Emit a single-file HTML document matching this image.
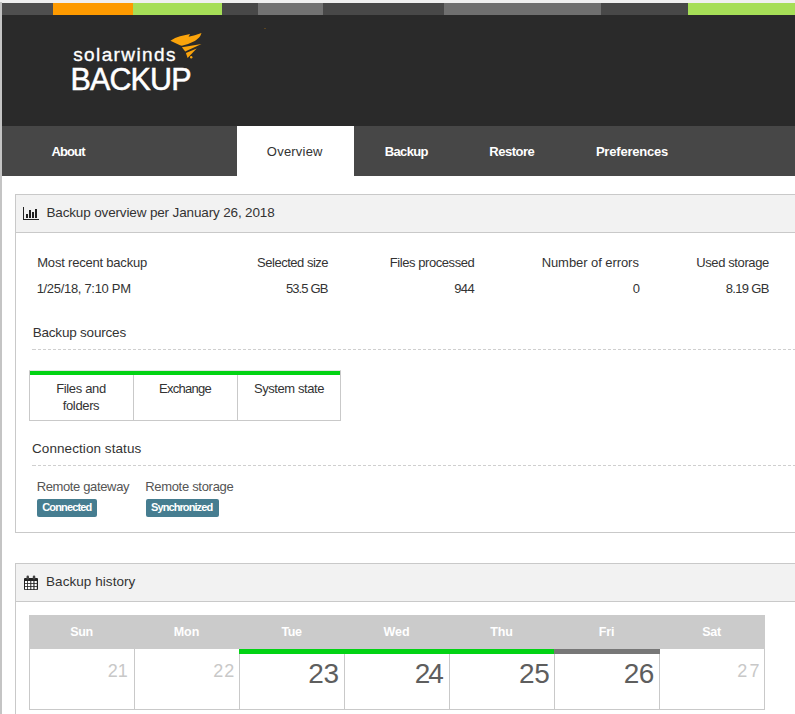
<!DOCTYPE html>
<html><head><meta charset="utf-8">
<style>
html,body{margin:0;padding:0;}
body{width:795px;height:714px;overflow:hidden;position:relative;background:#fff;font-family:"Liberation Sans",sans-serif;color:#333;}
.a{position:absolute;white-space:nowrap;line-height:1;}
.bx{position:absolute;}
</style></head><body>
<!-- frame -->
<div class="bx" style="left:0;top:0;width:795px;height:3px;background:#f0f0f0"></div>
<div class="bx" style="left:0;top:2px;width:2px;height:712px;background:#c4c4c4"></div>
<!-- top strip -->
<div class="bx" style="left:2px;top:3px;width:51px;height:12px;background:#4f4f4f"></div>
<div class="bx" style="left:53px;top:3px;width:80px;height:12px;background:#fd9a00"></div>
<div class="bx" style="left:133px;top:3px;width:89px;height:12px;background:#a6de57"></div>
<div class="bx" style="left:222px;top:3px;width:36px;height:12px;background:#484848"></div>
<div class="bx" style="left:258px;top:3px;width:65px;height:12px;background:#727272"></div>
<div class="bx" style="left:323px;top:3px;width:121px;height:12px;background:#484848"></div>
<div class="bx" style="left:444px;top:3px;width:157px;height:12px;background:#6f6f6f"></div>
<div class="bx" style="left:601px;top:3px;width:87px;height:12px;background:#484848"></div>
<div class="bx" style="left:688px;top:3px;width:107px;height:12px;background:#a6de57"></div>
<!-- header -->
<div class="bx" style="left:2px;top:15px;width:793px;height:111px;background:#2a2a2a"></div>
<div class="a" id="t_sw" style="left: 73.15px; top: 45px; font-size: 19px; color: rgb(255, 255, 255); right: auto; letter-spacing: 1.4px; -webkit-text-stroke: 0.35px #fff;">solarwinds</div>
<div class="a" id="t_bk" style="left: 70.55px; top: 63.5px; font-size: 30.5px; color: rgb(255, 255, 255); right: auto; letter-spacing: -0.9px; -webkit-text-stroke: 0.5px #fff;">BACKUP</div>
<svg class="bx" style="left:160px;top:25px" width="50" height="40" viewBox="0 0 50 40">
<path fill="#fba40b" d="M10.4,15.8 Q15,12.5 20,11.2 L30,9.1 L28.6,11.7 L34.8,10.3 L41.5,8.1 Q40.6,11 39.1,12.6 Q36.5,15 34.8,16 L28.1,18.9 L21.9,20.8 L20,20.3 Q15,18 10.4,15.8 Z"/>
<path fill="#fba40b" d="M21.9,22.2 L41.5,19.1 L25.2,26.5 Z"/>
<path fill="#fba40b" d="M25.9,27.9 L36.7,23.4 L27.6,33 Z"/>
<circle fill="#fba40b" cx="31.2" cy="32.2" r="1.2"/>
</svg>
<div class="bx" style="left:264px;top:28px;width:2px;height:1px;background:#5a4420"></div>
<!-- nav -->
<div class="bx" style="left:2px;top:126px;width:793px;height:50px;background:#474747"></div>
<div class="bx" style="left:237px;top:126px;width:117px;height:50px;background:#fff"></div>
<div class="a" id="n1" style="left: 51.4px; top: 145px; font-size: 13px; font-weight: bold; color: rgb(255, 255, 255); right: auto; letter-spacing: -0.85px;">About</div>
<div class="a" id="n2" style="left: 266.85px; top: 145px; font-size: 13px; color: rgb(51, 51, 51); right: auto; letter-spacing: 0.213px;">Overview</div>
<div class="a" id="n3" style="left: 384.65px; top: 145px; font-size: 13px; font-weight: bold; color: rgb(255, 255, 255); right: auto; letter-spacing: -0.62px;">Backup</div>
<div class="a" id="n4" style="left: 489.25px; top: 145px; font-size: 13px; font-weight: bold; color: rgb(255, 255, 255); right: auto; letter-spacing: -0.483px;">Restore</div>
<div class="a" id="n5" style="left: 595.9px; top: 145px; font-size: 13px; font-weight: bold; color: rgb(255, 255, 255); right: auto; letter-spacing: -0.2px;">Preferences</div>

<!-- panel 1 -->
<div class="bx" style="left:15px;top:194px;width:790px;height:337px;border:1px solid #c9c9c9;"></div>
<div class="bx" style="left:16px;top:195px;width:779px;height:37px;background:#f2f2f2;border-bottom:1px solid #c9c9c9"></div>
<svg class="bx" style="left:20px;top:204px" width="24" height="20" viewBox="0 0 24 20">
<rect x="3" y="3" width="1" height="13" fill="#222"></rect>
<rect x="3" y="15" width="16" height="1" fill="#222"></rect>
<rect x="6" y="10" width="2" height="4" fill="#222"></rect>
<rect x="9" y="6" width="2" height="8" fill="#222"></rect>
<rect x="12" y="8" width="2" height="6" fill="#222"></rect>
<rect x="15" y="5" width="2" height="9" fill="#222"></rect>
</svg>
<div class="a" id="h1" style="left: 46.45px; top: 206px; font-size: 13.5px; right: auto; letter-spacing: -0.146px;">Backup overview per January 26, 2018</div>

<div class="a" id="s1" style="left: 37.25px; top: 256px; font-size: 13px; right: auto; letter-spacing: -0.205px;">Most recent backup</div>
<div class="a" id="s2" style="right: auto; top: 256px; font-size: 13px; left: 257.07px; letter-spacing: -0.484px;">Selected size</div>
<div class="a" id="s3" style="right: auto; top: 256px; font-size: 13px; left: 389.8px; letter-spacing: -0.436px;">Files processed</div>
<div class="a" id="s4" style="right: auto; top: 256px; font-size: 13px; left: 541.65px; letter-spacing: -0.067px;">Number of errors</div>
<div class="a" id="s5" style="right: auto; top: 256px; font-size: 13px; left: 696.17px; letter-spacing: -0.381px;">Used storage</div>
<div class="a" id="v1" style="left: 36.65px; top: 282px; font-size: 13px; right: auto; letter-spacing: -0.313px;">1/25/18, 7:10 PM</div>
<div class="a" id="v2" style="right: auto; top: 282px; font-size: 13px; left: 285.9px; letter-spacing: -0.867px;">53.5 GB</div>
<div class="a" id="v3" style="right: auto; top: 282px; font-size: 13px; left: 454.2px; letter-spacing: -0.6px;">944</div>
<div class="a" id="v4" style="right: auto; top: 282px; font-size: 13px; left: 632.67px;">0</div>
<div class="a" id="v5" style="right: auto; top: 282px; font-size: 13px; left: 725.75px; letter-spacing: -0.683px;">8.19 GB</div>

<div class="a" id="bs" style="left: 32.7px; top: 325.5px; font-size: 13.5px; right: auto; letter-spacing: -0.199px;">Backup sources</div>
<div class="bx" style="left:32px;top:349px;width:763px;height:1px;background:repeating-linear-gradient(90deg,#cfcfcf 0 3px,transparent 3px 5px);background-position:1px 0"></div>

<div class="bx" style="left:29px;top:370px;width:310px;height:49px;border:1px solid #c9c9c9;border-top-color:#e3e3e3"></div><div class="bx" style="left:30px;top:371px;width:310px;height:4px;background:#02d314"></div>
<div class="bx" style="left:133px;top:375px;width:1px;height:45px;background:#c9c9c9"></div>
<div class="bx" style="left:237px;top:375px;width:1px;height:45px;background:#c9c9c9"></div>
<div class="a" id="c1" style="left:29px;width:104px;text-align:center;top:381px;font-size:13px;line-height:16.7px;white-space:normal;letter-spacing:-0.35px">Files and<br>folders</div>
<div class="a" id="c2" style="left: 133px; width: 104px; text-align: center; top: 381px; font-size: 13px; line-height: 16.7px; letter-spacing: -0.714px;">Exchange</div>
<div class="a" id="c3" style="left: 237px; width: 104px; text-align: center; top: 381px; font-size: 13px; line-height: 16.7px; letter-spacing: -0.408px;">System state</div>

<div class="a" id="cs" style="left: 32.05px; top: 441.5px; font-size: 13.5px; right: auto; letter-spacing: 0.069px;">Connection status</div>
<div class="bx" style="left:32px;top:465px;width:763px;height:1px;background:repeating-linear-gradient(90deg,#cfcfcf 0 3px,transparent 3px 5px);background-position:1px 0"></div>

<div class="a" id="r1" style="left: 36.65px; top: 480px; font-size: 13px; color: rgb(85, 85, 85); right: auto; letter-spacing: -0.361px;">Remote gateway</div>
<div class="a" id="r2" style="left: 145.15px; top: 480px; font-size: 13px; color: rgb(85, 85, 85); right: auto; letter-spacing: -0.3px;">Remote storage</div>
<div class="bx" style="left:37px;top:499px;width:60px;height:18px;background:#467d90;border-radius:2px"></div>
<div class="bx" style="left:146px;top:499px;width:73px;height:18px;background:#467d90;border-radius:2px"></div>
<div class="a" id="b1" style="left: 42.25px; top: 502px; font-size: 11px; font-weight: bold; color: rgb(255, 255, 255); right: auto; letter-spacing: -0.864px;">Connected</div>
<div class="a" id="b2" style="left: 151px; top: 502px; font-size: 11px; font-weight: bold; color: rgb(255, 255, 255); right: auto; letter-spacing: -0.909px;">Synchronized</div>

<!-- panel 2 -->
<div class="bx" style="left:15px;top:563px;width:790px;height:300px;border:1px solid #c9c9c9;"></div>
<div class="bx" style="left:16px;top:564px;width:779px;height:37px;background:#f2f2f2;border-bottom:1px solid #c9c9c9"></div>
<svg class="bx" style="left:20px;top:572px" width="24" height="22" viewBox="0 0 24 22">
<rect x="4" y="6" width="14" height="12" rx="1" fill="#222"></rect>
<rect x="6.5" y="3.5" width="2.5" height="4" rx="1.2" fill="#444"></rect>
<rect x="12.8" y="3.5" width="2.5" height="4" rx="1.2" fill="#444"></rect>
<g fill="#fff">
<rect x="5" y="9" width="2.2" height="2.2"></rect><rect x="8" y="9" width="2.3" height="2.2"></rect><rect x="11.3" y="9" width="2.1" height="2.2"></rect><rect x="14.5" y="9" width="2.3" height="2.2"></rect>
<rect x="5" y="12" width="2.2" height="2.2"></rect><rect x="8" y="12" width="2.3" height="2.2"></rect><rect x="11.3" y="12" width="2.1" height="2.2"></rect><rect x="14.5" y="12" width="2.3" height="2.2"></rect>
<rect x="5" y="15" width="2.2" height="2.2"></rect><rect x="8" y="15" width="2.3" height="2.2"></rect><rect x="11.3" y="15" width="2.1" height="2.2"></rect><rect x="14.5" y="15" width="2.3" height="2.2"></rect>
</g>
</svg>
<div class="a" id="h2" style="left: 46px; top: 575px; font-size: 13.5px; right: auto; letter-spacing: 0.061px;">Backup history</div>

<!-- calendar -->
<div class="bx" style="left:29px;top:615px;width:736px;height:34px;background:#cbcbcb"></div>
<div class="bx" style="left:29px;top:649px;width:734px;height:60px;border:1px solid #c9c9c9;border-top:none"></div>
<div class="a" id="d0" style="left: 29px; width: 105px; text-align: center; top: 626px; font-size: 12.5px; font-weight: bold; color: rgb(255, 255, 255); letter-spacing: -0.35px;">Sun</div>
<div class="a" id="num0" style="right: auto; top: 662px; font-size: 18px; color: rgb(200, 200, 200); left: 107.72px; letter-spacing: -0.1px;">21</div>
<div class="a" id="d1" style="left: 134px; width: 105px; text-align: center; top: 626px; font-size: 12.5px; font-weight: bold; color: rgb(255, 255, 255); letter-spacing: -0.1px;">Mon</div>
<div class="bx" style="left:134px;top:649px;width:1px;height:60px;background:#c9c9c9"></div>
<div class="a" id="num1" style="right: auto; top: 662px; font-size: 18px; color: rgb(200, 200, 200); left: 213.22px; letter-spacing: 1.1px;">22</div>
<div class="a" id="d2" style="left: 239px; width: 105px; text-align: center; top: 626px; font-size: 12.5px; font-weight: bold; color: rgb(255, 255, 255); letter-spacing: -0.35px;">Tue</div>
<div class="bx" style="left:239px;top:649px;width:1px;height:60px;background:#c9c9c9"></div>
<div class="a" id="num2" style="right: auto; top: 660px; font-size: 28px; color: #5e5e5e; left: 308.34px; letter-spacing: -0.4px;">23</div>
<div class="a" id="d3" style="left:344px;width:105px;text-align:center;top:626px;font-size:12.5px;font-weight:bold;color:#fff">Wed</div>
<div class="bx" style="left:344px;top:649px;width:1px;height:60px;background:#c9c9c9"></div>
<div class="a" id="num3" style="right: auto; top: 660px; font-size: 28px; color: #5e5e5e; left: 414.69px; letter-spacing: -1.9px;">24</div>
<div class="a" id="d4" style="left: 449px; width: 105px; text-align: center; top: 626px; font-size: 12.5px; font-weight: bold; color: rgb(255, 255, 255); letter-spacing: -0.1px;">Thu</div>
<div class="bx" style="left:449px;top:649px;width:1px;height:60px;background:#c9c9c9"></div>
<div class="a" id="num4" style="right: auto; top: 660px; font-size: 28px; color: #5e5e5e; left: 519.04px; letter-spacing: -0.4px;">25</div>
<div class="a" id="d5" style="left: 554px; width: 105px; text-align: center; top: 626px; font-size: 12.5px; font-weight: bold; color: rgb(255, 255, 255); letter-spacing: -0.1px;">Fri</div>
<div class="bx" style="left:554px;top:649px;width:1px;height:60px;background:#c9c9c9"></div>
<div class="a" id="num5" style="right: auto; top: 660px; font-size: 28px; color: #5e5e5e; left: 623.84px; letter-spacing: -0.6px;">26</div>
<div class="a" id="d6" style="left: 659px; width: 105px; text-align: center; top: 626px; font-size: 12.5px; font-weight: bold; color: rgb(255, 255, 255); letter-spacing: -0.35px;">Sat</div>
<div class="bx" style="left:659px;top:649px;width:1px;height:60px;background:#c9c9c9"></div>
<div class="a" id="num6" style="right: auto; top: 662px; font-size: 18px; color: rgb(200, 200, 200); left: 737.32px; letter-spacing: 2.1px;">27</div>
<div class="bx" style="left:239px;top:649px;width:315px;height:5px;background:#02d314"></div>
<div class="bx" style="left:554px;top:649px;width:106px;height:5px;background:#777"></div>

</body></html>
